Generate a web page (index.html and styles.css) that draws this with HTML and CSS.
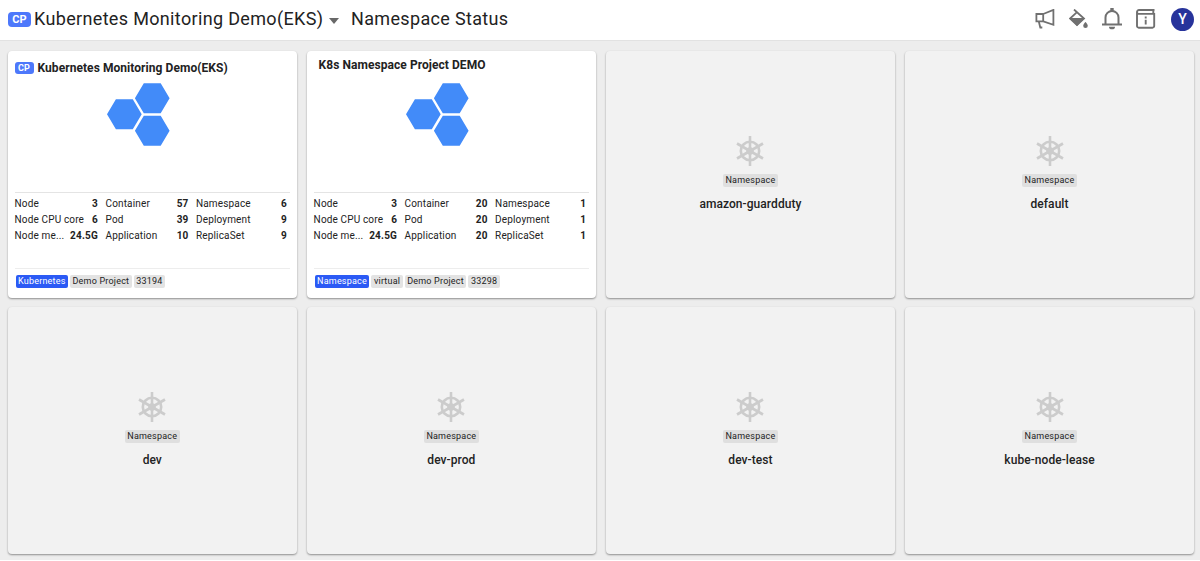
FILE: index.html
```html
<!DOCTYPE html>
<html lang="en">
<head>
<meta charset="utf-8">
<title>Namespace Status</title>
<link rel="stylesheet" href="styles.css">
</head>
<body>
<svg class="defs" width="0" height="0" aria-hidden="true">
  <symbol id="hexes" viewBox="0 0 63 63">
    <path fill="#428bf9" d="M36.8.3h16.9l8.9 15-8.9 15H36.8l-8.9-15zM8.9 16.3h16.9l8.9 15-8.9 15H8.9L0 31.3zM36.8 32.7h16.9l8.9 15-8.9 15H36.8l-8.9-15z"/>
  </symbol>
  <symbol id="helm" viewBox="0 0 28 30">
    <g fill="none" stroke="#ccc" stroke-width="2.6">
      <circle cx="14" cy="15" r="9.2"/>
      <path d="M14 0v30M1 7.500l26 15M1 22.500l26-15"/>
    </g>
    <circle cx="14" cy="15" r="3.800" fill="#ccc"/>
  </symbol>
</svg>
<header class="topbar">
  <span class="cp cp-large">CP</span>
  <span class="project">Kubernetes Monitoring Demo(EKS)</span>
  <span class="caret"></span>
  <span class="page-name">Namespace Status</span>
  <nav class="tools">
    <svg width="20" height="20" viewBox="0 0 20 20" fill="none" stroke="#707070" stroke-width="1.800"><path d="M8.200 5H1.400v7.300h6.800M8.200 5v7.300l10.200 3.500V.900zM3.800 12.500l1.500 6h2"/></svg>
    <svg width="20" height="20" viewBox="0 0 20 20"><path d="M5 .500l10 9-7 6.500L1 9.500l7-6.300" fill="none" stroke="#707070" stroke-width="1.800"/><path d="M.500 9h15L8 17z" fill="#707070"/><path d="M16.500 13s-2.300 2.200-2.300 3.700a2.300 2.300 0 0 0 4.600 0c0-1.500-2.300-3.700-2.300-3.700z" fill="#707070"/></svg>
    <svg width="20" height="22" viewBox="0 0 20 22"><path d="M0 16.500h20M3.500 16.500V9.500a6.500 6.500 0 0 1 13 0v7" fill="none" stroke="#707070" stroke-width="2"/><path d="M8.300 0h3.400v3H8.300zM7 18.700h6a3 2.600 0 0 1-6 0z" fill="#707070"/></svg>
    <svg width="20" height="20" viewBox="0 0 20 20" fill="none" stroke="#707070" stroke-width="1.900"><path d="M18.500 1H3a2 2 0 0 0-2 2v14a1.700 1.700 0 0 0 1.700 1.700h13.800a1.700 1.700 0 0 0 1.700-1.700V4.900H3A1.900 1.900 0 0 1 1 3M17.300 1v3.500"/><path d="M9.700 7.500v2M9.700 10.700v4.800"/></svg>
    <span class="avatar">Y</span>
  </nav>
</header>
<main class="board">
  <section class="card project-card">
    <h2 class="card-title"><span class="cp">CP</span>Kubernetes Monitoring Demo(EKS)</h2>
    <svg class="hexes" width="63" height="63"><use href="#hexes"/></svg>
    <dl class="stats">
      <div><dt>Node</dt><dd>3</dd></div><div><dt>Container</dt><dd>57</dd></div><div><dt>Namespace</dt><dd>6</dd></div>
      <div><dt>Node CPU core</dt><dd>6</dd></div><div><dt>Pod</dt><dd>39</dd></div><div><dt>Deployment</dt><dd>9</dd></div>
      <div><dt>Node me...</dt><dd>24.5G</dd></div><div><dt>Application</dt><dd>10</dd></div><div><dt>ReplicaSet</dt><dd>9</dd></div>
    </dl>
    <footer class="tags"><span class="tag tag-blue">Kubernetes</span><span class="tag">Demo Project</span><span class="tag">33194</span></footer>
  </section>
  <section class="card project-card">
    <h2 class="card-title plain">K8s Namespace Project DEMO</h2>
    <svg class="hexes" width="63" height="63"><use href="#hexes"/></svg>
    <dl class="stats">
      <div><dt>Node</dt><dd>3</dd></div><div><dt>Container</dt><dd>20</dd></div><div><dt>Namespace</dt><dd>1</dd></div>
      <div><dt>Node CPU core</dt><dd>6</dd></div><div><dt>Pod</dt><dd>20</dd></div><div><dt>Deployment</dt><dd>1</dd></div>
      <div><dt>Node me...</dt><dd>24.5G</dd></div><div><dt>Application</dt><dd>20</dd></div><div><dt>ReplicaSet</dt><dd>1</dd></div>
    </dl>
    <footer class="tags"><span class="tag tag-blue">Namespace</span><span class="tag">virtual</span><span class="tag">Demo Project</span><span class="tag">33298</span></footer>
  </section>
  <section class="card ns-card"><svg width="28" height="30"><use href="#helm"/></svg><span class="tag">Namespace</span><h3>amazon-guardduty</h3></section>
  <section class="card ns-card"><svg width="28" height="30"><use href="#helm"/></svg><span class="tag">Namespace</span><h3>default</h3></section>
  <section class="card ns-card"><svg width="28" height="30"><use href="#helm"/></svg><span class="tag">Namespace</span><h3>dev</h3></section>
  <section class="card ns-card"><svg width="28" height="30"><use href="#helm"/></svg><span class="tag">Namespace</span><h3>dev-prod</h3></section>
  <section class="card ns-card"><svg width="28" height="30"><use href="#helm"/></svg><span class="tag">Namespace</span><h3>dev-test</h3></section>
  <section class="card ns-card"><svg width="28" height="30"><use href="#helm"/></svg><span class="tag">Namespace</span><h3>kube-node-lease</h3></section>
</main>
</body>
</html>
```
FILE: styles.css
```css
* { box-sizing: border-box; }
body { margin: 0; background: #fff; color: #222; font-family: Roboto, sans-serif; }
h2, h3, dl, dd { margin: 0; }
svg { display: block; flex: none; }
.defs { position: absolute; }

.topbar { display: flex; align-items: center; height: 40px; padding: 0 6px 2px 8px; background: #fff; white-space: nowrap; }
.cp { flex: none; width: 19px; height: 12px; margin-right: 4px; border-radius: 3px; background: #4d78fb; color: #fff; font-size: 9px; font-weight: 700; line-height: 13px; text-align: center; }
.cp-large { width: 23px; height: 15px; font-size: 11px; line-height: 15px; border-radius: 4px; margin-right: 3px; }
.project, .page-name { font-size: 18px; line-height: 24px; letter-spacing: 0.34px; }
.project { width: 290px; }
.caret { margin: 4px 12px 0 5px; border: 5.5px solid transparent; border-top: 6px solid #686868; border-bottom: 0; }
.tools { display: flex; align-items: center; gap: 13.6px; margin-left: auto; }
.avatar { width: 23px; height: 23px; margin-left: 1.5px; border-radius: 50%; background: #27339b; color: #fff; font-size: 14px; font-weight: 500; line-height: 23px; text-align: center; }

.board { display: grid; grid-template-columns: repeat(4, 289.5px); grid-template-rows: 247px 247px; gap: 9px 9.6px; height: 520px; padding: 10px 0 0 7.5px; background: #ededed; border-top: 1px solid #e2e2e2; }
.card { border-radius: 4px; box-shadow: 0 1px 2px rgba(0, 0, 0, 0.4); }
.project-card { display: flex; flex-direction: column; padding: 7px; background: #fff; }
.card-title { display: flex; align-items: center; height: 19px; font-size: 12px; font-weight: 700; letter-spacing: 0.06px; white-space: nowrap; }
.card-title.plain { height: 14px; margin-bottom: 5px; padding-left: 5px; }
.hexes { margin: 6px 0 0 92px; }
.stats { display: grid; grid-template-columns: 83.5px 83px 91px; grid-auto-rows: 16px; column-gap: 7.5px; align-content: start; height: 76px; margin-top: 46px; padding-top: 3px; border-top: 1px solid #e4e4e4; }
.stats div { display: flex; justify-content: space-between; font-size: 10px; line-height: 16px; letter-spacing: 0.15px; white-space: nowrap; }
dd { font-weight: 700; letter-spacing: 0.2px; }
.tags { display: flex; gap: 2px; padding: 6px 0 0 1px; border-top: 1px solid #ededed; }
.tag { height: 13px; padding: 0 2.5px; border-radius: 2px; background: #e3e3e3; font-size: 9px; line-height: 13px; letter-spacing: 0.2px; white-space: nowrap; }
.tag-blue { background: #2b5af5; color: #fff; }
.ns-card { display: flex; flex-direction: column; align-items: center; padding-top: 84.5px; background: #f2f2f2; }
.ns-card .tag { margin-top: 8.5px; background: #dfdfdf; }
.ns-card h3 { margin-top: 9px; font-size: 12px; font-weight: 500; line-height: 16px; letter-spacing: 0.06px; }
```
